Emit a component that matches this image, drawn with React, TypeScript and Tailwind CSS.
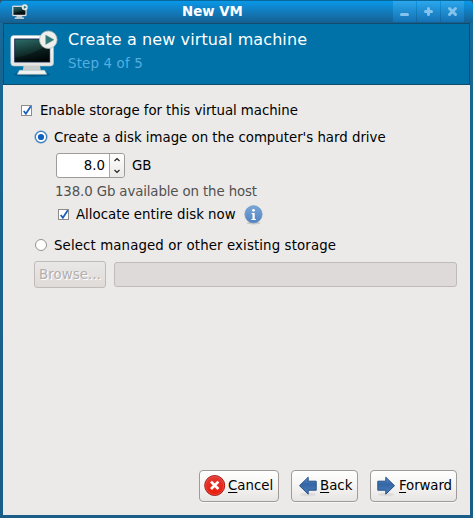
import React from "react";

function Monitor({ className }: { className: string }) {
  return (
    <svg viewBox="0 0 48 48" className={className}>
      <defs>
        <linearGradient id="screen" x1="0.3" y1="0" x2="0.6" y2="1">
          <stop offset="0" stopColor="#2a6663" />
          <stop offset="0.55" stopColor="#12312f" />
          <stop offset="1" stopColor="#020808" />
        </linearGradient>
        <linearGradient id="frame" x1="0" y1="0" x2="0" y2="1">
          <stop offset="0" stopColor="#ffffff" />
          <stop offset="1" stopColor="#e4e4e2" />
        </linearGradient>
      </defs>
      <ellipse cx="22" cy="44.500" rx="18" ry="2.200" fill="#04486d" opacity="0.6" />
      <rect x="0.800" y="5.500" width="42.700" height="30.500" rx="3" fill="url(#frame)" stroke="#b9c3c6" strokeWidth="0.6" />
      <path d="M13.500 36h16.500l0.800 4.500h-18z" fill="#c9cbca" />
      <path d="M9.500 40.300h25l2.200 4H7.300z" fill="#f1f1ef" stroke="#c4c8c8" strokeWidth="0.500" />
      <rect x="4.700" y="9" width="35" height="23" fill="url(#screen)" stroke="#18244c" strokeWidth="0.900" />
      <path d="M5.200 31.500v-4c10-1 20-5 34-13v17z" fill="#010606" opacity="0.4" />
      <circle cx="38.300" cy="9.700" r="8.800" fill="#eeeeec" stroke="#b8bebc" strokeWidth="0.800" />
      <path d="M35.700 5v9.500l8.300-4.700z" fill="#2d7775" stroke="#5b9491" strokeWidth="0.400" />
    </svg>
  );
}

function Check() {
  return (
    <svg viewBox="0 0 12 12" className="h-3 w-3 shrink-0">
      <rect x="0.500" y="0.500" width="10" height="10" fill="#fff" stroke="#8c8b89" />
      <path d="M2.700 6l2.200 2.800L9.800 1.300" fill="none" stroke="#1960bd" strokeWidth="1.800" />
    </svg>
  );
}

function Radio({ checked = false }: { checked?: boolean }) {
  return (
    <svg viewBox="0 0 14 14" className="mb-0.5 h-3.5 w-3.5 shrink-0">
      {checked && <circle cx="7" cy="7" r="6.300" fill="none" stroke="#9fc2df" strokeWidth="0.900" />}
      <circle cx="7" cy="7" r={checked ? 5.6 : 5.5} fill="#fff" stroke={checked ? "#3e82bb" : "#949290"} strokeWidth={checked ? 1.2 : 1} />
      {checked && <circle cx="7" cy="7" r="3.100" fill="#1260bd" />}
    </svg>
  );
}

function Info() {
  return (
    <svg viewBox="0 0 20 20" className="h-5 w-5 shrink-0">
      <defs>
        <linearGradient id="info" x1="0" y1="0" x2="0" y2="1">
          <stop offset="0" stopColor="#7ba7d8" />
          <stop offset="1" stopColor="#4f83c0" />
        </linearGradient>
      </defs>
      <ellipse cx="9.500" cy="18" rx="7" ry="1.500" fill="#cbcac8" />
      <circle cx="9.500" cy="9.300" r="8.600" fill="url(#info)" stroke="#6a94c4" strokeWidth="0.800" />
      <circle cx="9.500" cy="5.300" r="1.400" fill="#fff" />
      <path d="M7.500 8h3.200v5.900h1.200v1H7.300v-1H8.500V9H7.500z" fill="#fff" />
    </svg>
  );
}

function CancelIcon() {
  return (
    <svg viewBox="0 0 22 22" className="h-[22px] w-[22px] shrink-0">
      <defs>
        <linearGradient id="red" x1="0" y1="0" x2="0" y2="1">
          <stop offset="0" stopColor="#e23a35" />
          <stop offset="1" stopColor="#ea1c08" />
        </linearGradient>
      </defs>
      <circle cx="10.700" cy="10.500" r="10" fill="url(#red)" stroke="#a51717" />
      <circle cx="10.700" cy="10.500" r="9" fill="none" stroke="#f06a62" strokeWidth="0.500" />
      <path d="M7 6.600l7.400 7.400M14.400 6.600L7 14" stroke="#fff" strokeWidth="2.700" />
    </svg>
  );
}

function Arrow({ right = false }: { right?: boolean }) {
  return (
    <svg viewBox="0 0 20 22" className={right ? "h-[22px] w-5 shrink-0 -scale-x-100" : "h-[22px] w-5 shrink-0"}>
      <defs>
        <linearGradient id="blue" x1="0" y1="0" x2="0" y2="1">
          <stop offset="0" stopColor="#5e91c9" />
          <stop offset="0.4" stopColor="#3466a5" />
          <stop offset="1" stopColor="#4d7fbd" />
        </linearGradient>
      </defs>
      <ellipse cx="10" cy="19.500" rx="8" ry="1.800" fill="#dddcda" />
      <path d="M1.500 10.700l8.700-8.500V6.200h8v9h-8v4z" fill="url(#blue)" stroke="#24508a" />
    </svg>
  );
}

const button =
  "flex h-8 items-center rounded-[4px] border border-[#9e9b99] bg-linear-to-b from-white via-[#f5f4f3] to-[#e7e5e4] shadow-[0_1px_0_#f7f6f5]";

export default function App() {
  return (
    <div className="bg-[#35506a]">
      <main className="flex h-[518px] w-[473px] flex-col overflow-hidden rounded-t-[5px] bg-linear-to-b from-[#1272a8] via-[#196693] via-10% to-[#1a5d87] font-['DejaVu_Sans',sans-serif] text-[13.33px] whitespace-nowrap text-black">
        <header className="flex h-[23px] shrink-0 border-t border-[#0a6799] bg-linear-to-b from-[#0798e8] to-[#155f91] pl-3">
          <Monitor className="mt-[3px] h-4 w-4" />
          <h1 className="ml-[154px] w-[211px] text-[13.33px] leading-[21px] font-bold text-white">New VM</h1>
          <div className="flex h-[21px] gap-px">
            <div className="flex w-[23px] items-center justify-center bg-linear-to-b from-[#2ba7ee] to-[#1372b3]">
              <svg viewBox="0 0 11 11" className="h-[11px] w-[11px]"><path d="M2.500 8.500h6" stroke="#83c3ec" strokeWidth="3" strokeLinecap="round" /></svg>
            </div>
            <div className="flex w-[23px] items-center justify-center bg-linear-to-b from-[#2ba7ee] to-[#1372b3]">
              <svg viewBox="0 0 11 11" className="h-[11px] w-[11px]"><path d="M2.500 5.500h6M5.500 2.500v6" stroke="#83c3ec" strokeWidth="3" strokeLinecap="round" /></svg>
            </div>
            <div className="flex w-[23px] items-center justify-center bg-linear-to-b from-[#2ba7ee] to-[#1372b3]">
              <svg viewBox="0 0 11 11" className="h-[11px] w-[11px]"><path d="M2.500 2.500l6 6m0-6l-6 6" stroke="#83c3ec" strokeWidth="3" strokeLinecap="round" /></svg>
            </div>
          </div>
        </header>

        <section className="mx-[3px] flex h-[62px] shrink-0 border border-[#114c6c] bg-[#0072a8] pl-[6px]">
          <Monitor className="mt-[6px] h-12 w-12" />
          <div className="pl-[10px]">
            <h2 className="mt-[5px] h-[21px] text-[16px] leading-[21px] tracking-[0.1px] text-white">Create a new virtual machine</h2>
            <p className="mt-[5px] text-[13.33px] leading-[18px] tracking-[0.18px] text-[#55aee0]">Step 4 of 5</p>
          </div>
        </section>

        <section className="mx-[3px] flex h-[430px] shrink-0 flex-col bg-[#ebeae8] pt-[16px] pr-[13px] pl-[18px]">
          <div className="flex h-5 items-center gap-[7px]">
            <Check />
            <span className="tracking-[-0.05px]">Enable storage for this virtual machine</span>
          </div>
          <div className="mt-[7px] flex h-5 items-center gap-[6px] pl-[13px]">
            <Radio checked />
            <span className="tracking-[-0.01px]">Create a disk image on the computer's hard drive</span>
          </div>
          <div className="mt-[5px] flex h-[25px] items-center gap-[7px] pl-[35px]">
            <div className="flex h-[25px] w-[69px] rounded-[3px] border border-[#9e9b99] bg-white">
              <span className="w-[53px] pr-[4px] text-right leading-[23px]">8.0</span>
              <div className="flex flex-1 items-center justify-center rounded-r-[3px] border-l border-[#aaa7a4] bg-linear-to-b from-white to-[#ebe9e7]">
                <svg viewBox="0 0 14 23" className="h-[23px] w-3.5"><path d="M4.500 7L7 4.500l2.500 2.500M4.500 16L7 18.500 9.500 16" fill="none" stroke="#222" strokeWidth="1.200" /></svg>
              </div>
            </div>
            <span>GB</span>
          </div>
          <div className="mt-[4px] h-5 pl-[34px] leading-5 tracking-[-0.12px] text-[#525150]">138.0 Gb available on the host</div>
          <div className="mt-[3px] flex h-5 items-center pl-[37px]">
            <Check />
            <span className="w-[174px] pl-[6px]">Allocate entire disk now</span>
            <Info />
          </div>
          <div className="mt-[11px] flex h-5 items-center gap-[6px] pl-[13px]">
            <Radio />
            <span className="tracking-[0.12px]">Select managed or other existing storage</span>
          </div>
          <div className="mt-[5px] flex h-[27px] items-center gap-2 pl-[13px]">
            <div className="h-[27px] w-[72px] rounded-[3px] border border-[#c0bbb9] bg-linear-to-b from-[#eae8e7] to-[#dedbd9] text-center leading-[25px] tracking-[0.1px] text-[#b4aeac] [text-shadow:1px_1px_0_white]">Browse...</div>
            <div className="h-[25px] flex-1 rounded-[3px] border border-[#c0bbb9] bg-[#dedad9]" />
          </div>
          <footer className="mt-auto mb-[13px] flex justify-end gap-3">
            <div className={button + " w-[80px] gap-[2px] pl-[4px]"}><CancelIcon /><span><u className="underline-offset-2">C</u>ancel</span></div>
            <div className={button + " w-[67px] gap-[2px] pl-[6px]"}><Arrow /><span><u className="underline-offset-2">B</u>ack</span></div>
            <div className={button + " w-[87px] gap-[3px] pl-[5px]"}><Arrow right /><span className="tracking-[-0.1px]"><u className="underline-offset-2">F</u>orward</span></div>
          </footer>
        </section>
      </main>
    </div>
  );
}
